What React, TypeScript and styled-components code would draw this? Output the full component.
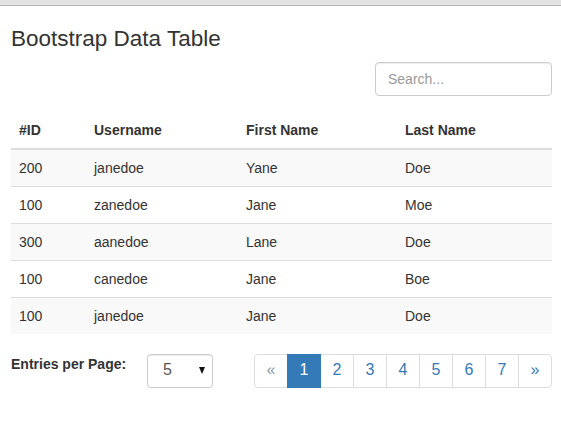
import styled, { createGlobalStyle } from "styled-components";

const GlobalStyle = createGlobalStyle`
  html, body {
    margin: 0;
    padding: 0;
    background: #fff;
  }
  body {
    font-family: "Liberation Sans", Arial, sans-serif;
    font-size: 14px;
    line-height: 1.42857;
    color: #333;
  }
  * {
    box-sizing: border-box;
  }
`;

const TopBar = styled.div`
  height: 6px;
  background: #e4e4e4;
  border-bottom: 1px solid #b4b4b4;
`;

const Container = styled.div`
  padding: 0 9px 0 11px;
`;

const Title = styled.h3`
  margin: 21px 0 0;
  font-size: 22.5px;
  font-weight: 400;
  line-height: 1.1;
`;

const Toolbar = styled.div`
  display: flex;
  justify-content: flex-end;
  margin-top: 10px;
`;

const SearchInput = styled.input`
  width: 177px;
  height: 34px;
  padding: 6px 12px;
  font-family: inherit;
  font-size: 14px;
  color: #555;
  border: 1px solid #ccc;
  border-radius: 4px;
  box-shadow: inset 0 1px 1px rgba(0, 0, 0, 0.075);
  outline: none;

  &::placeholder {
    color: #999;
  }
`;

const StyledTable = styled.table`
  width: 100%;
  margin-top: 16px;
  border-collapse: collapse;
  border-spacing: 0;
`;

const TH = styled.th<{ $w?: number }>`
  width: ${(p) => (p.$w ? `${p.$w}px` : "auto")};
  padding: 8px;
  text-align: left;
  font-weight: 700;
  line-height: 20px;
  vertical-align: bottom;
  border-bottom: 2px solid #ddd;
`;

const TR = styled.tr`
  &:nth-child(odd) {
    background-color: #f9f9f9;
  }
`;

const TD = styled.td`
  padding: 8px;
  line-height: 20px;
  border-top: 1px solid #ddd;
`;

const Footer = styled.div`
  display: flex;
  align-items: flex-start;
  margin-top: 20px;
`;

const EntriesLabel = styled.label`
  font-weight: 700;
  margin-top: 1px;
  width: 136px;
`;

const Select = styled.div`
  display: flex;
  align-items: center;
  justify-content: space-between;
  width: 66px;
  height: 34px;
  padding: 0 7px 0 15px;
  font-size: 16px;
  color: #555;
  border: 1px solid #ccc;
  border-radius: 4px;
  box-shadow: inset 0 1px 1px rgba(0, 0, 0, 0.075);
`;

const Caret = styled.span`
  width: 0;
  height: 0;
  border-left: 3.5px solid transparent;
  border-right: 3.5px solid transparent;
  border-top: 7px solid #111;
`;

const Pagination = styled.ul`
  display: flex;
  margin: 0 0 0 auto;
  padding: 0;
  list-style: none;
`;

const PageItem = styled.li<{ $active?: boolean; $muted?: boolean }>`
  display: flex;
  align-items: center;
  justify-content: center;
  width: 34px;
  height: 34px;
  margin-left: -1px;
  font-size: 16px;
  color: ${(p) => (p.$active ? "#fff" : p.$muted ? "#8a9bb0" : "#337ab7")};
  background: ${(p) => (p.$active ? "#337ab7" : "#fff")};
  border: 1px solid ${(p) => (p.$active ? "#337ab7" : "#ddd")};
  position: relative;
  z-index: ${(p) => (p.$active ? 2 : 1)};

  &:first-child {
    margin-left: 0;
    border-radius: 4px 0 0 4px;
  }
  &:last-child {
    border-radius: 0 4px 4px 0;
  }
`;

const rows = [
  ["200", "janedoe", "Yane", "Doe"],
  ["100", "zanedoe", "Jane", "Moe"],
  ["300", "aanedoe", "Lane", "Doe"],
  ["100", "canedoe", "Jane", "Boe"],
  ["100", "janedoe", "Jane", "Doe"],
];

export default function App() {
  return (
    <>
      <GlobalStyle />
      <TopBar />
      <Container>
        <Title>Bootstrap Data Table</Title>
        <Toolbar>
          <SearchInput placeholder="Search..." />
        </Toolbar>
        <StyledTable>
          <thead>
            <tr>
              <TH $w={75}>#ID</TH>
              <TH $w={152}>Username</TH>
              <TH $w={159}>First Name</TH>
              <TH>Last Name</TH>
            </tr>
          </thead>
          <tbody>
            {rows.map((r, i) => (
              <TR key={i}>
                {r.map((c, j) => (
                  <TD key={j}>{c}</TD>
                ))}
              </TR>
            ))}
          </tbody>
        </StyledTable>
        <Footer>
          <EntriesLabel>Entries per Page:</EntriesLabel>
          <Select>
            <span>5</span>
            <Caret />
          </Select>
          <Pagination>
            <PageItem $muted>«</PageItem>
            <PageItem $active>1</PageItem>
            {[2, 3, 4, 5, 6, 7].map((n) => (
              <PageItem key={n}>{n}</PageItem>
            ))}
            <PageItem>»</PageItem>
          </Pagination>
        </Footer>
      </Container>
    </>
  );
}
